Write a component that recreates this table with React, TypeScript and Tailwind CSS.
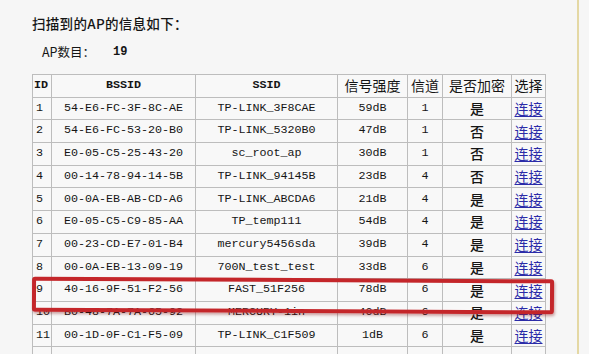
import React from "react";

const rows: [string, string, string, string, string, string][] = [
  ["1", "54-E6-FC-3F-8C-AE", "TP-LINK_3F8CAE", "59dB", "1", "是"],
  ["2", "54-E6-FC-53-20-B0", "TP-LINK_5320B0", "47dB", "1", "否"],
  ["3", "E0-05-C5-25-43-20", "sc_root_ap", "30dB", "1", "否"],
  ["4", "00-14-78-94-14-5B", "TP-LINK_94145B", "23dB", "4", "否"],
  ["5", "00-0A-EB-AB-CD-A6", "TP-LINK_ABCDA6", "21dB", "4", "是"],
  ["6", "E0-05-C5-C9-85-AA", "TP_temp111", "54dB", "4", "是"],
  ["7", "00-23-CD-E7-01-B4", "mercury5456sda", "39dB", "4", "是"],
  ["8", "00-0A-EB-13-09-19", "700N_test_test", "33dB", "6", "是"],
  ["9", "40-16-9F-51-F2-56", "FAST_51F256", "78dB", "6", "是"],
  ["10", "B0-48-7A-7A-65-92", "MERCURY-1in", "40dB", "6", "是"],
  ["11", "00-1D-0F-C1-F5-09", "TP-LINK_C1F509", "1dB", "6", "是"],
];

const mono = "font-['Liberation_Mono','Noto_Sans_CJK_SC',monospace]";
const cjk = "font-['Noto_Sans_CJK_SC',sans-serif]";
const cell =
  "border-r border-b border-[#bdbdbd] flex items-center overflow-hidden whitespace-nowrap";

export default function App() {
  return (
    <div className="relative w-[589px] h-[354px] overflow-hidden bg-[#f6f6f6] text-[#151515]">
      <div className="w-[579px] h-full border-r-2 border-[#e4d8a4] pl-[32px] pt-[14px]">
        <div className={`${cjk} text-[13.5px] leading-[18px] font-medium tracking-[0.3px]`}>
          扫描到的AP的信息如下：
        </div>
        <div className={`${cjk} text-[12.5px] leading-[16px] mt-[12px] ml-[10px] flex`}>
          <span>AP数目：</span>
          <span className={`${mono} ml-[18px] text-[12px] font-semibold`}>19</span>
        </div>
        <div className="mt-[14px] w-[514px] border-l border-t border-[#bdbdbd] grid grid-cols-[19px_144px_142px_70px_35px_69px_34px] auto-rows-[22.7px] bg-[#f8f8f8]">
          <div className={`${cell} ${mono} text-[11.7px] font-bold pl-[1px]`}>ID</div>
          <div className={`${cell} ${mono} text-[11.7px] font-bold justify-center`}>BSSID</div>
          <div className={`${cell} ${mono} text-[11.7px] font-bold justify-center`}>SSID</div>
          <div className={`${cell} ${cjk} text-[14px] justify-center`}>信号强度</div>
          <div className={`${cell} ${cjk} text-[14px] justify-center`}>信道</div>
          <div className={`${cell} ${cjk} text-[14px] justify-center`}>是否加密</div>
          <div className={`${cell} ${cjk} text-[14px] justify-center`}>选择</div>
          {rows.map((r) => (
            <React.Fragment key={r[0]}>
              <div className={`${cell} ${mono} text-[11.7px] font-medium pl-[3px]`}>{r[0]}</div>
              <div className={`${cell} ${mono} text-[11.7px] font-medium justify-center`}>{r[1]}</div>
              <div className={`${cell} ${mono} text-[11.7px] font-medium justify-center`}>{r[2]}</div>
              <div className={`${cell} ${mono} text-[11.7px] font-medium justify-center`}>{r[3]}</div>
              <div className={`${cell} ${mono} text-[11.7px] font-medium justify-center`}>{r[4]}</div>
              <div className={`${cell} ${cjk} text-[14px] font-medium justify-center`}>{r[5]}</div>
              <div className={`${cell} ${cjk} text-[14px] justify-center`}>
                <span className="text-[#2b2ba8] underline underline-offset-2">连接</span>
              </div>
            </React.Fragment>
          ))}
          {Array.from({ length: 7 }).map((_, i) => (
            <div key={"e" + i} className={cell}></div>
          ))}
        </div>
      </div>
      <div className="absolute left-[32px] top-[278px] w-[522px] h-[35px] border-4 border-[#c4262a] rounded-[3px] shadow-[1px_2px_3px_rgba(120,0,0,0.35)] rotate-[0.3deg]"></div>
    </div>
  );
}
